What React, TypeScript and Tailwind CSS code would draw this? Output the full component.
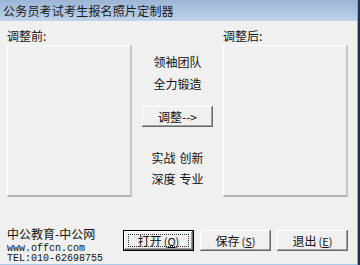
import React from "react";

const cjk = { fontFamily: '"Noto Sans CJK SC", "Liberation Sans", sans-serif' };

function WinButton({ label, accel, def }: { label: string; accel: string; def?: boolean }) {
  return (
    <div
      className={`w-[71px] h-[21px] flex items-center justify-center bg-[#f0f0f0] text-[12px] leading-[12px] text-[#111] ${def ? "border border-black" : ""}`}
      style={{
        boxShadow: "inset -1px -1px #696969, inset 1px 1px #ffffff, inset -2px -2px #a0a0a0",
      }}
    >
      <div className={`flex items-center justify-center ${def ? "border border-dotted border-[#333] w-[61px] h-[13px]" : ""}`}>
        <span>{label}</span>
        <span className="text-[11px] ml-[2px]">
          (<span className="underline">{accel}</span>)
        </span>
      </div>
    </div>
  );
}

function PicBox() {
  return (
    <div className="w-[125px] h-[152px] bg-[#f0f0f0] border-t border-l border-t-white border-l-white border-r-2 border-b-2 border-r-[#c8c8c8] border-b-[#b4b4b4]" />
  );
}

export default function App() {
  return (
    <div className="w-[360px] h-[265px] flex bg-[#f0f0f0]" style={cjk}>
      <div className="flex-1 flex flex-col border-b border-b-[#a8cbec]">
        <div className="h-[21px] bg-gradient-to-b from-[#9db5d6] to-[#bdd3ea] flex items-center pl-[3px] text-[12px] text-[#1a1a1a] tracking-[0.2px]">
          公务员考试考生报名照片定制器
        </div>
        <div className="flex pt-[8px] pl-[7px]">
          <div className="flex flex-col">
            <div className="h-[13px] text-[12px] leading-[13px] text-[#111]">调整前:</div>
            <div className="mt-[3px]"><PicBox /></div>
          </div>
          <div className="w-[91px] flex flex-col items-center pt-[27px] text-[12px] leading-[12px] text-[#111]">
            <div>领袖团队</div>
            <div className="mt-[10px]">全力锻造</div>
            <div className="mt-[16px]">
              <div
                className="w-[71px] h-[21px] flex items-center justify-center bg-[#f0f0f0]"
                style={{ boxShadow: "inset -1px -1px #696969, inset 1px 1px #ffffff, inset -2px -2px #a0a0a0" }}
              >
                调整--&gt;
              </div>
            </div>
            <div className="mt-[25px] flex gap-[4px]"><span>实战</span><span>创新</span></div>
            <div className="mt-[9px] flex gap-[4px]"><span>深度</span><span>专业</span></div>
          </div>
          <div className="flex flex-col">
            <div className="h-[13px] text-[12px] leading-[13px] text-[#111]">调整后:</div>
            <div className="mt-[3px]"><PicBox /></div>
          </div>
        </div>
        <div className="flex pl-[7px] mt-[31px]">
          <div className="flex flex-col w-[116px]">
            <div className="text-[12px] leading-[12px] text-[#111]">中公教育-中公网</div>
            <div className="text-[10px] leading-[11px] mt-[3px] text-[#111]" style={{ fontFamily: '"Liberation Mono", monospace' }}>
              www.offcn.com
            </div>
            <div className="text-[10px] leading-[10px] text-[#111]" style={{ fontFamily: '"Liberation Mono", monospace' }}>
              TEL:010-62698755
            </div>
          </div>
          <div className="flex gap-[6px] mt-[2px]">
            <WinButton label="打开" accel="O" def />
            <WinButton label="保存" accel="S" />
            <WinButton label="退出" accel="E" />
          </div>
        </div>
      </div>
      <div className="w-[1px] bg-[#47c1ee]" />
      <div className="w-[2px] bg-[#24324d]" />
    </div>
  );
}
